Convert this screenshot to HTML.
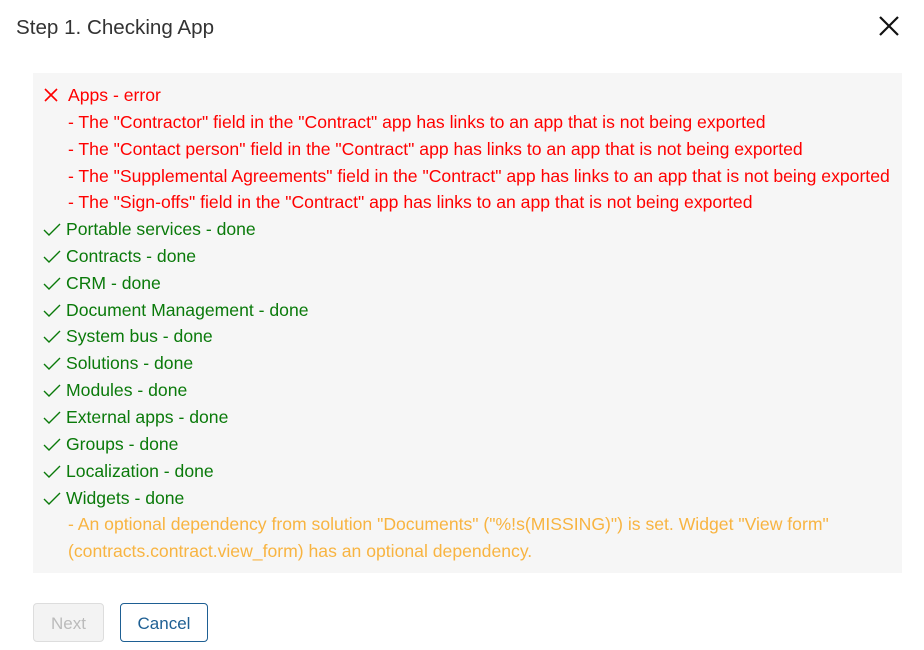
<!DOCTYPE html>
<html><head><style>
body{margin:0;width:924px;height:650px;background:#fff;font-family:"Liberation Sans",sans-serif;position:relative;overflow:hidden}
.title{position:absolute;left:16px;top:16px;font-size:20.6px;color:#333}
.close{position:absolute;left:878px;top:15px}
.box{position:absolute;left:33px;top:73px;width:869px;height:500px;background:#f6f6f6}
.l{position:absolute;font-size:17.6px;white-space:nowrap;line-height:20px}
.r{color:#ff0000}.g{color:#0a7a0a}.o{color:#f8b441}
.ic{position:absolute}
.btn{position:absolute;top:603px;height:39px;box-sizing:border-box;border-radius:4px;font-size:17px;text-align:center;line-height:40px}
</style></head><body>
<div class="title">Step 1. Checking App</div>
<svg class="close" width="22" height="22" viewBox="0 0 22 22"><path d="M2 2L20 20M20 2L2 20" stroke="#111" stroke-width="2.2"/></svg>
<div class="box"></div>
<svg class="ic" style="left:44px;top:88px" width="14" height="14"><path d="M1 1L13 13M13 1L1 13" stroke="#f00" stroke-width="1.6"/></svg>
<div class="l r" style="left:68px;top:85px">Apps - error</div>
<div class="l r" style="left:68px;top:112px">- The "Contractor" field in the "Contract" app has links to an app that is not being exported</div>
<div class="l r" style="left:68px;top:139px">- The "Contact person" field in the "Contract" app has links to an app that is not being exported</div>
<div class="l r" style="left:68px;top:166px">- The "Supplemental Agreements" field in the "Contract" app has links to an app that is not being exported</div>
<div class="l r" style="left:68px;top:192px">- The "Sign-offs" field in the "Contract" app has links to an app that is not being exported</div>
<div id="done"></div>
<script>
var items=["Portable services","Contracts","CRM","Document Management","System bus","Solutions","Modules","External apps","Groups","Localization","Widgets"];
var h="";items.forEach(function(t,i){var y=219+i*26.85;
h+='<svg class="ic" style="left:43px;top:'+(y+4)+'px" width="18" height="14"><path d="M1 7L6 12L17 1" fill="none" stroke="#0a7a0a" stroke-width="1.4"/></svg>';
h+='<div class="l g" style="left:66px;top:'+y+'px">'+t+' - done</div>';});
document.getElementById("done").outerHTML=h;
</script>
<div class="l o" style="left:68px;top:514px">- An optional dependency from solution "Documents" ("%!s(MISSING)") is set. Widget "View form"</div>
<div class="l o" style="left:68px;top:541px">(contracts.contract.view_form) has an optional dependency.</div>
<div class="btn" style="left:33px;width:71px;background:#f3f3f3;border:1px solid #ddd;color:#bbb">Next</div>
<div class="btn" style="left:120px;width:88px;background:#fff;border:1px solid #1e5f93;color:#1e5f93">Cancel</div>
</body></html>
